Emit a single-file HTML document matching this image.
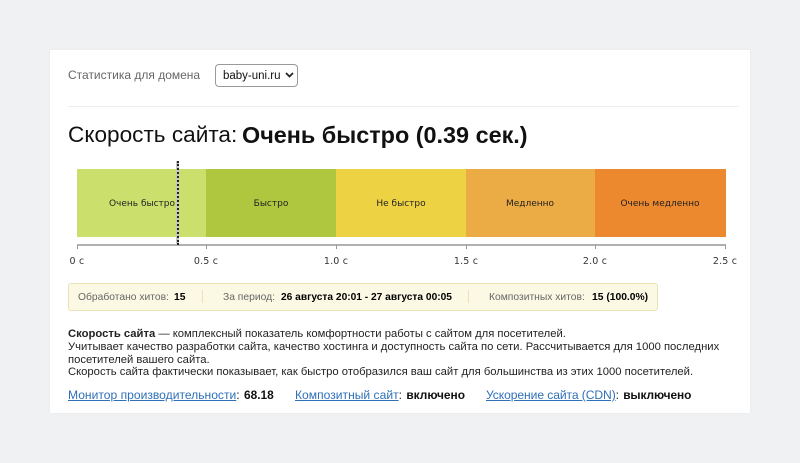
<!DOCTYPE html>
<html lang="ru"><head><meta charset="utf-8"><title>Скорость сайта</title>
<style>
html,body{margin:0;padding:0;width:800px;height:463px;overflow:hidden;background:#eff1f3}
body{font-family:"Liberation Sans",Arial,sans-serif;color:#000;position:relative}
.a{position:absolute;white-space:nowrap}
#card{left:50px;top:50px;width:700px;height:363px;background:#fff;box-shadow:0 0 2px rgba(0,0,0,.05)}
.seg{top:169px;height:68px}
.sl{top:199px;font:9px "DejaVu Sans",sans-serif;color:#222;transform:translateX(-50%)}
.tl{top:256px;font:9.5px "DejaVu Sans",sans-serif;color:#333;letter-spacing:.2px;transform:translateX(-50%)}
.tk{top:245px;width:1px;height:4px;background:#999}
.t{font-size:11.25px;line-height:13px}
.s{font-size:10.3px;line-height:13px}
.g{color:#666}
a{color:#2f70b9;text-decoration:underline}
.l{font-size:12.1px;top:388px;color:#222}
.l b{font-size:11.9px;color:#111;margin-left:1px}
</style></head><body>
<div class="a" id="card"></div>
<div class="a" style="left:68px;top:68px;font-size:12px;color:#666">Статистика для домена</div>
<div class="a" style="left:215px;top:64px;width:81px;height:21px;border:1px solid #999;border-radius:4px;background:#fff"></div>
<div class="a" style="left:223px;top:70px;font-size:11.5px;color:#111">baby-uni.ru</div>
<svg class="a" style="left:285px;top:72px" width="9" height="6" viewBox="0 0 9 6"><path d="M1 1l3.5 3.5L8 1" fill="none" stroke="#222" stroke-width="1.7"/></svg>
<div class="a" style="left:68px;top:106px;width:671px;height:1px;background:#eeeeee"></div>
<div class="a" style="left:68px;top:121px;font-size:22.6px;line-height:28px;color:#111">Скорость сайта:</div>
<div class="a" style="left:242px;top:121px;font-size:23.4px;line-height:28px;font-weight:bold;color:#111">Очень быстро (0.39 сек.)</div>

<div class="a seg" style="left:77px;width:129px;background:#cbdf6c"></div>
<div class="a seg" style="left:206px;width:130px;background:#afc63f"></div>
<div class="a seg" style="left:336px;width:130px;background:#edd343"></div>
<div class="a seg" style="left:466px;width:129px;background:#ebab45"></div>
<div class="a seg" style="left:595px;width:131px;background:#ec892f"></div>
<div class="a sl" style="left:142px">Очень быстро</div>
<div class="a sl" style="left:271px">Быстро</div>
<div class="a sl" style="left:401px">Не быстро</div>
<div class="a sl" style="left:530px">Медленно</div>
<div class="a sl" style="left:660px">Очень медленно</div>
<div class="a" style="left:77px;top:244px;width:649px;height:1.5px;background:#b0b0b0"></div>
<div class="a tk" style="left:77px"></div><div class="a tk" style="left:206px"></div><div class="a tk" style="left:336px"></div><div class="a tk" style="left:466px"></div><div class="a tk" style="left:595px"></div><div class="a tk" style="left:725px"></div>
<div class="a" style="left:176px;top:161px;width:3px;height:84px;background:#c4c8c0"></div>
<div class="a" style="left:177px;top:161px;height:84px;border-left:2px dotted #222"></div>
<div class="a tl" style="left:77px">0 с</div>
<div class="a tl" style="left:206px">0.5 с</div>
<div class="a tl" style="left:336px">1.0 с</div>
<div class="a tl" style="left:466px">1.5 с</div>
<div class="a tl" style="left:595px">2.0 с</div>
<div class="a tl" style="left:725px">2.5 с</div>

<div class="a" style="left:68px;top:283px;width:588px;height:26px;background:#fbf9e3;border:1px solid #e9e4b8;border-radius:3px"></div>
<div class="a s g" style="left:78px;top:291px">Обработано хитов:</div>
<div class="a s" style="left:174px;top:291px"><b>15</b></div>
<div class="a" style="left:202px;top:290px;width:1px;height:13px;background:#e9e4b8"></div>
<div class="a s g" style="left:223px;top:291px">За период:</div>
<div class="a s" style="left:281px;top:291px;font-size:10.2px"><b>26 августа 20:01 - 27 августа 00:05</b></div>
<div class="a" style="left:468px;top:290px;width:1px;height:13px;background:#e9e4b8"></div>
<div class="a s g" style="left:489px;top:291px">Композитных хитов:</div>
<div class="a s" style="left:592px;top:291px"><b>15 (100.0%)</b></div>

<div class="a t" style="left:68px;top:328px;color:#222"><b>Скорость сайта</b> — комплексный показатель комфортности работы с сайтом для посетителей.</div>
<div class="a t" style="left:68px;top:341px;color:#222">Учитывает качество разработки сайта, качество хостинга и доступность сайта по сети. Рассчитывается для 1000 последних</div>
<div class="a t" style="left:68px;top:354px;color:#222">посетителей вашего сайта.</div>
<div class="a t" style="left:68px;top:366px;color:#222">Скорость сайта фактически показывает, как быстро отобразился ваш сайт для большинства из этих 1000 посетителей.</div>
<div class="a l" style="left:68px"><a href="#">Монитор производительности</a>: <b>68.18</b></div>
<div class="a l" style="left:295px"><a href="#">Композитный сайт</a>: <b>включено</b></div>
<div class="a l" style="left:486px;letter-spacing:-.08px"><a href="#">Ускорение сайта (CDN)</a>: <b>выключено</b></div>
</body></html>
